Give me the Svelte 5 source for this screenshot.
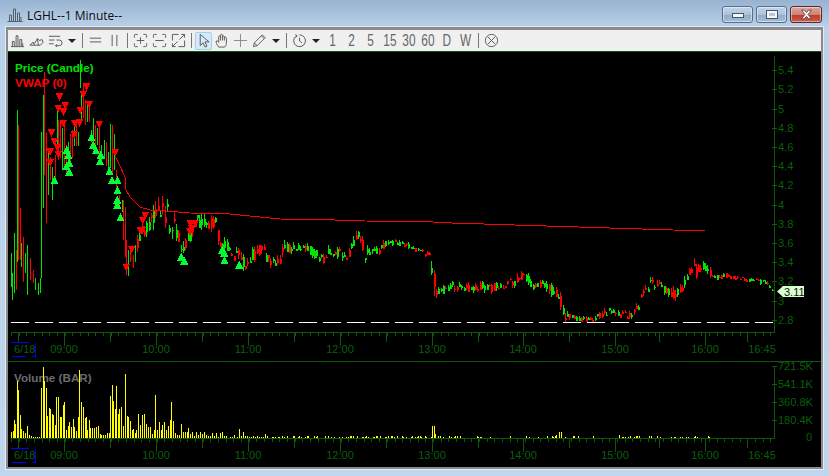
<script>
// pseudo random so the candles stay the same on every load
let seed = 4711;
const rnd = () => {
  seed = (seed * 16807) % 2147483647;
  return seed / 2147483647;
};

const icons = {
  bars: 'M1 14.5h14M2.5 14V9h2v5M6.5 14V3h2v11M10.5 14V7h2v7M13.5 14v-3',
  wave: 'M1 13l3-3 2 1 3-5 2 2 3-1 1 3-3 3zM4 10l2 3M9 6l1 7',
  list: 'M1 3.5h12M1 7.5h6M1 11.5h5M9 7.5h3a2.8 2.8 0 0 1 0 6H8M9.5 12L8 13.5 9.5 15',
  eq: 'M2 5.5h12M2 9.5h12',
  pause: 'M5.5 2v12M10.5 2v12',
  zoom_in: 'M1.5 5V2.5a1 1 0 0 1 1-1H5M11 1.5h2.5a1 1 0 0 1 1 1V5M14.5 11v2.5a1 1 0 0 1-1 1H11M5 14.5H2.5a1 1 0 0 1-1-1V11M4 8h8M8 4.5v7',
  zoom_out: 'M1.5 5V2.5a1 1 0 0 1 1-1H5M11 1.5h2.5a1 1 0 0 1 1 1V5M14.5 11v2.5a1 1 0 0 1-1 1H11M5 14.5H2.5a1 1 0 0 1-1-1V11M3.5 8h9',
  fit: 'M1.5 8V1.5H8M14.5 8v6.5H8M9 7l5.5-5.5M11 1.5h3.5V5M7 9l-5.5 5.5M1.5 11v3.5H5',
  cursor: 'M4.5 1.5v12l3-3 2.2 4.5 2-1-2.2-4.5H14z',
  hand: 'M5 15C3.5 12.5 1.5 10 2.5 8.5c1-.7 2 .5 2.5 1.5V4c0-1.5 2-1.5 2 0V2.5c0-1.5 2-1.5 2 0V4c0-1.3 2-1.3 2 0v1.2c0-1.2 2.2-1.2 2.2.3V11c0 2-1 3-1.7 4zM7 4v4M9 4v4M11 5v3',
  plus: 'M8 1v14M1 8h14',
  pencil: 'M1.5 14.5l1-4 8.5-8.5 3 3-8.5 8.5zM2.5 10.5l3 3M10 3l3 3',
  clock: 'M5 2.8a6.3 6.3 0 1 0 3-.8M3.5 1.5l2 1.5-1.5 1.7M8 5v3.5l2.5 1.8',
  cancel: 'M8 1.5a6.5 6.5 0 1 0 .01 0zM4 4l8 8M12 4l-8 8'
};

const toolbar_items = [
  { icon: 'bars' }, { icon: 'wave' }, { icon: 'list' }, { drop: true }, { sep: true },
  { icon: 'eq' }, { icon: 'pause' }, { sep: true },
  { icon: 'zoom_in' }, { icon: 'zoom_out' }, { icon: 'fit' }, { sep: true },
  { icon: 'cursor', active: true }, { icon: 'hand' }, { icon: 'plus', light: true }, { icon: 'pencil' }, { drop: true }, { sep: true },
  { icon: 'clock' }, { drop: true },
  { text: '1' }, { text: '2' }, { text: '5' }, { text: '15' }, { text: '30' }, { text: '60' }, { text: 'D' }, { text: 'W' },
  { sep: true }, { icon: 'cancel' }
];

// first minutes of the day, read off by hand: x, top, bottom, colour
const early_bars = [
  [11, 253, 287, 'g'], [12, 273, 300, 'g'], [14, 233, 293, 'g'], [16, 250, 290, 'r'], [17, 110, 262, 'g'], [18, 125, 260, 'r'],
  [20, 208, 260, 'r'], [21, 243, 267, 'g'], [23, 237, 282, 'r'], [25, 253, 273, 'g'], [27, 245, 295, 'g'], [30, 258, 280, 'r'],
  [33, 270, 283, 'r'], [35, 278, 290, 'g'], [38, 283, 295, 'g'], [40, 278, 293, 'g'], [41, 132, 278, 'g'], [43, 95, 208, 'g'],
  [44, 72, 175, 'r'], [46, 133, 223, 'r'], [48, 150, 195, 'g'], [50, 157, 180, 'r'], [52, 167, 200, 'g'], [55, 155, 182, 'r'],
  [57, 105, 157, 'g'], [58, 120, 160, 'r'], [60, 122, 158, 'r'], [62, 128, 170, 'g'], [64, 120, 168, 'r'], [66, 145, 175, 'r'],
  [68, 142, 168, 'g'], [70, 134, 165, 'r'], [72, 130, 158, 'r'], [74, 125, 146, 'g'], [76, 120, 146, 'r'], [78, 132, 146, 'g'],
  [80, 60, 88, 'g'], [81, 92, 122, 'g'], [83, 85, 118, 'r'], [85, 100, 125, 'r'], [87, 105, 122, 'g'], [89, 108, 122, 'r'],
  [91, 130, 142, 'g'], [93, 118, 150, 'g'], [95, 125, 146, 'r'], [97, 128, 145, 'g'], [99, 128, 155, 'r'], [101, 145, 160, 'g'],
  [104, 140, 158, 'g'], [106, 142, 166, 'r'], [108, 152, 170, 'g'], [110, 124, 168, 'g'], [112, 125, 175, 'r'], [114, 134, 170, 'g'],
  [116, 170, 195, 'r'], [119, 195, 205, 'r'], [122, 200, 212, 'g'], [123, 200, 240, 'r'], [125, 207, 257, 'r'], [126, 240, 275, 'r'],
  [128, 250, 276, 'g'], [130, 248, 262, 'r'], [133, 255, 268, 'r'], [135, 245, 262, 'g']
];

// rest of the session as x, mid price in px, swing
const price_path = [
  [137, 245, 12], [140, 232, 12], [148, 225, 14], [155, 212, 24], [160, 208, 22], [163, 208, 22], [170, 220, 22], [178, 234, 10],
  [182, 246, 14], [190, 238, 12], [197, 222, 14], [205, 222, 12], [215, 222, 10], [219, 244, 9], [228, 246, 8], [233, 255, 8],
  [240, 254, 11], [245, 268, 8], [250, 256, 12], [258, 251, 10], [262, 249, 9], [268, 260, 10], [273, 262, 10], [280, 262, 10],
  [282, 251, 12], [290, 247, 8], [300, 247, 7], [310, 250, 8], [315, 254, 8], [322, 258, 8], [330, 251, 10], [340, 253, 8],
  [345, 256, 8], [352, 247, 8], [357, 236, 10], [362, 244, 8], [365, 254, 12], [372, 252, 8], [378, 251, 6], [385, 243, 5],
  [395, 243, 5], [400, 244, 5], [410, 247, 5], [420, 251, 5], [430, 254, 4], [433, 275, 26], [435, 292, 8], [440, 288, 7],
  [444, 290, 6], [450, 284, 7], [458, 287, 7], [470, 288, 6], [480, 285, 8], [490, 288, 8], [500, 286, 8], [510, 283, 8],
  [520, 278, 8], [523, 270, 12], [530, 285, 7], [538, 283, 6], [545, 287, 8], [555, 291, 8], [560, 300, 10], [564, 316, 10],
  [570, 316, 6], [578, 319, 4], [590, 320, 4], [600, 315, 6], [610, 310, 9], [615, 313, 8], [620, 314, 6], [630, 316, 6],
  [635, 311, 8], [645, 291, 10], [650, 282, 8], [655, 284, 7], [665, 288, 9], [672, 293, 9], [680, 291, 10], [690, 270, 10],
  [695, 270, 13], [702, 266, 6], [708, 270, 10], [712, 278, 4], [725, 275, 3], [740, 278, 3], [755, 281, 3], [766, 281, 5],
  [770, 289, 3], [774, 290, 2]
];

const mid_at = (x) => {
  for (let i = 1; i < price_path.length; i++) {
    const [x1, y1, s1] = price_path[i];
    if (x <= x1) {
      const [x0, y0, s0] = price_path[i - 1];
      const t = (x - x0) / (x1 - x0);
      return [y0 + (y1 - y0) * t, s0 + (s1 - s0) * t];
    }
  }
  return price_path[price_path.length - 1].slice(1);
};

const build_candles = () => {
  const out = early_bars.map(([x, top, bottom, c]) => ({
    x,
    top,
    bottom,
    body_top: top + (bottom - top) * 0.2,
    body_bottom: bottom - (bottom - top) * 0.2,
    body_width: 1,
    color: c === 'g' ? '#00e600' : '#ff0000'
  }));
  for (let x = 137; x < 774; x += 2.3) {
    const [mid, swing] = mid_at(x);
    const open = mid + (rnd() - 0.5) * swing * 1.15;
    const close = mid + (rnd() - 0.5) * swing * 1.15;
    const top = Math.min(open, close) - rnd() * swing * 0.5;
    const bottom = Math.max(open, close) + rnd() * swing * 0.5;
    out.push({
      x: Math.round(x),
      top: Math.round(top),
      bottom: Math.round(bottom),
      body_top: Math.round(Math.min(open, close)),
      body_bottom: Math.round(Math.max(open, close)) + 1,
      body_width: 2,
      color: close < open ? '#00e600' : '#ff0000'
    });
  }
  return out;
};
const candles = build_candles();

const down_marks = [
  [259, 80], [250, 102], [178, 110], [196, 135], [268, 132], [241, 150], [175, 145], [190, 155], [238, 188], [190, 190],
  [298, 192], [225, 190], [222, 222], [154, 218], [163, 245], [173, 262], [150, 275], [175, 282], [151, 306], [346, 276],
  [395, 567], [379, 622], [436, 465], [428, 480], [420, 510], [426, 512], [572, 490], [586, 490], [576, 505], [570, 515]
];
const up_marks = [
  [163, 362], [208, 336], [208, 310], [200, 320], [205, 285], [200, 270], [275, 232], [280, 255], [288, 272], [300, 305],
  [302, 285], [328, 335], [336, 362], [352, 362], [352, 392], [352, 420], [352, 435], [362, 472], [544, 592], [553, 604],
  [673, 602], [673, 580], [666, 570], [718, 615]
];
const to_page = ([zx, zy]) => [zx / 3, 60 + zy / 3];
const down_points = down_marks.map(to_page).map(([x, y]) => `${x - 4},${y - 3.5} ${x + 4},${y - 3.5} ${x},${y + 4.5}`);
const up_points = up_marks.map(to_page).map(([x, y]) => `${x - 4},${y + 3.5} ${x + 4},${y + 3.5} ${x},${y - 4.5}`);

const vwap_line = '115.5,157 120,166 125,177 126,190 130,197 140,207 150,210 165,211 190,213 230,214 240,215 280,219 335,220 365,221 430,221.5 436,222.5 705,231';

// volume as zoomed x / 3, height
const early_volume = [
  [33, 6], [38, 7], [42, 18], [46, 14], [52, 57], [55, 48], [61, 23], [64, 9], [70, 7], [76, 5], [82, 12], [88, 3], [92, 2], [98, 1], [104, 1],
  [112, 1], [118, 1], [124, 50], [130, 71], [133, 57], [139, 50], [142, 22], [148, 30], [151, 29], [157, 24], [160, 23], [166, 13], [169, 41],
  [175, 41], [181, 21], [184, 21], [190, 33], [193, 36], [199, 8], [205, 12], [208, 16], [213, 11], [220, 19], [223, 11], [229, 7], [235, 21],
  [238, 68], [244, 36], [250, 31], [254, 20], [259, 21], [262, 8], [268, 18], [271, 10], [277, 10], [282, 10], [288, 11], [295, 12], [300, 4],
  [304, 3], [310, 3], [316, 3], [322, 5], [328, 5], [331, 42], [337, 53], [340, 37], [346, 29], [349, 52], [355, 24], [358, 29], [364, 31],
  [370, 12], [376, 64], [382, 22], [385, 21], [391, 17], [397, 8], [400, 9], [406, 5], [409, 8], [415, 24], [421, 13], [427, 23], [433, 24],
  [439, 14], [445, 11], [451, 11], [457, 4], [463, 8], [466, 43], [472, 8], [476, 16], [482, 8], [487, 13], [493, 16], [499, 8], [505, 12],
  [511, 18], [514, 36], [520, 17], [526, 5], [532, 3], [538, 3], [544, 14], [550, 6], [556, 6], [562, 6], [565, 10], [571, 4], [577, 6], [583, 2],
  [589, 6], [595, 3], [601, 6], [607, 4], [613, 6], [619, 3], [625, 2], [631, 2], [637, 5], [643, 2], [649, 5], [655, 1], [661, 5], [667, 6],
  [673, 2], [679, 2], [691, 1], [697, 1], [703, 3], [712, 1], [718, 9], [724, 2], [730, 6], [736, 2], [742, 2], [748, 1], [754, 1], [760, 2],
  [766, 1], [772, 2], [778, 1], [784, 1], [790, 1], [796, 4], [802, 2]
].map(([zx, h]) => [zx / 3, h]);

const late_volume = () => {
  const out = [];
  for (let x = 270; x < 710; x += 1.53) {
    const quiet = x > 440 ? 0.72 : 0.5;
    let h = rnd() < quiet ? 0 : 1 + Math.floor(rnd() * 2);
    if (rnd() < 0.04) h += 2;
    if (Math.abs(x - 433) < 1) h = 12;
    if (Math.abs(x - 560) < 1) h = 6;
    if (h > 0) out.push([x, h]);
  }
  return out;
};
const volume_bars = [...early_volume, ...late_volume()];

const price_labels = [
  ['5.4', 70], ['5.2', 89], ['5', 108.5], ['4.8', 127.5], ['4.6', 147], ['4.4', 166], ['4.2', 185], ['4', 204.5],
  ['3.8', 224], ['3.6', 243], ['3.4', 262], ['3.2', 281], ['3', 300.5], ['2.8', 319.5]
];
const volume_labels = [['721.5K', 366], ['541.1K', 384], ['360.8K', 402], ['180.4K', 420]];
const time_labels = [
  ['09:00', 64], ['10:00', 156], ['11:00', 248], ['12:00', 340], ['13:00', 432], ['14:00', 523], ['15:00', 615], ['16:00', 705], ['16:45', 762]
];

const ticks = [];
for (let x = 11; x < 775; x += 7.67) ticks.push(Math.round(x));
const half_hours = [18, 110, 202, 294, 386, 478, 569, 659, 747];
</script>

<main class="window">
  <header class="titlebar">
    <svg class="app_icon" viewBox="0 0 16 14" aria-hidden="true">
      <path d="M0.5 13.5h15M2.5 13V7h2v6M6.5 13V1h2v12M10.5 13V5h2v8M14 13V9" />
    </svg>
    <span class="title">LGHL--1 Minute--</span>
    <div class="controls">
      <div class="ctl"><span class="min_glyph"></span></div>
      <div class="ctl"><span class="max_glyph"></span></div>
      <div class="ctl close">
        <svg viewBox="0 0 12 10" aria-hidden="true"><path d="M1.5 1h2.5l2 2.2L8 1h2.5L7.5 5l3 4H8L6 6.8 4 9H1.5l3-4z" /></svg>
      </div>
    </div>
  </header>

  <section class="frame">
    <div class="toolbar">
      {#each toolbar_items as item}
        {#if item.sep}
          <span class="sep"></span>
        {:else if item.drop}
          <span class="drop"><i></i></span>
        {:else if item.text}
          <span class="btn"><b>{item.text}</b></span>
        {:else}
          <span class="btn" class:active={item.active} class:light={item.light}>
            <svg viewBox="0 0 16 16" aria-hidden="true"><path d={icons[item.icon]} /></svg>
          </span>
        {/if}
      {/each}
    </div>

    <svg class="chart" viewBox="8 52 813 415" aria-label="LGHL one minute chart">
      <text class="legend" x="15" y="72" fill="#00e000">Price (Candle)</text>
      <text class="legend" x="15" y="87" fill="#ff0000">VWAP (0)</text>
      <text class="legend" x="14" y="382" fill="#6a6a72">Volume (BAR)</text>

      <g shape-rendering="crispEdges">
        {#each candles as c}
          <rect x={c.x} y={c.top} width="1" height={c.bottom - c.top} fill={c.color} />
          <rect x={c.x} y={c.body_top} width={c.body_width} height={Math.max(1, c.body_bottom - c.body_top)} fill={c.color} />
        {/each}
      </g>

      <polyline points={vwap_line} fill="none" stroke="#ff0000" stroke-width="1" shape-rendering="crispEdges" />

      <g shape-rendering="crispEdges">
        {#each down_points as p}<polygon points={p} fill="#ff0000" />{/each}
        {#each up_points as p}<polygon points={p} fill="#00ff33" />{/each}
      </g>

      <path d="M11 322.5H774" stroke="#fff" stroke-dasharray="18 6" shape-rendering="crispEdges" />

      <g shape-rendering="crispEdges">
        {#each volume_bars as [x, h]}
          <rect x={Math.round(x)} y={438 - h} width="1.4" height={h} fill="#ffff00" />
        {/each}
      </g>

      <g class="axis" shape-rendering="crispEdges">
        <path d="M774.5 56V332.5H11M774.5 366V438.5H11M8 361.5H821" />
        {#each [332, 438] as y}
          {#each ticks as x}<path d="M{x + 0.5} {y}v4" />{/each}
          {#each half_hours as x}<path d="M{x + 0.5} {y}v10" />{/each}
          {#each time_labels.slice(0, 8) as [, x]}<path d="M{x + 0.5} {y}v14" />{/each}
        {/each}
        {#each price_labels as [, y]}<path d="M772 {Math.round(y) + 0.5}h5" />{/each}
        {#each volume_labels as [, y]}<path d="M772 {y + 0.5}h5" />{/each}
      </g>

      <g class="axis_text">
        {#each price_labels as [label, y]}<text x="778" y={y + 4}>{label}</text>{/each}
        {#each volume_labels as [label, y]}<text x="778" y={y + 4}>{label}</text>{/each}
        <text x="806" y="441">0</text>
        {#each [349, 455] as y}
          <text x="14" y={y + 4}>6/18</text>
          {#each time_labels as [label, x]}
            <text x={x} y={y + 4} text-anchor="middle">{label}</text>
          {/each}
        {/each}
      </g>

      <g class="date_mark" shape-rendering="crispEdges">
        {#each [0, 106] as dy}
          <path d="M11 {342.5 + dy}h18M12 {356.5 + dy}h14M32 {356.5 + dy}h3.5v-14" />
        {/each}
      </g>

      <g>
        <polygon points="777,291.5 783,286 783,297" fill="#d8ffd0" />
        <rect x="783" y="286" width="21" height="11" fill="#d8ffd0" />
        <text class="last_price" x="784" y="295.5">3.11</text>
      </g>
    </svg>
  </section>
</main>

<style>
:global(body) {
  margin: 0;
  background-color: #bcd4ea;
}

.window {
  width: 829px;
  height: 476px;
  overflow: hidden;
  display: flex;
  flex-direction: column;
  background: linear-gradient(180deg, #98b3d0 0, #bad2ea 28px, #bfd6ec 100%);
  font-family: "Liberation Sans", Arial, sans-serif;
}

.titlebar {
  height: 27px;
  flex: none;
  display: flex;
  align-items: flex-start;
  padding: 6px 7px 0 7px;
  box-sizing: border-box;
}

.app_icon {
  width: 16px;
  height: 14px;
  margin-top: 2px;
  fill: none;
  stroke: #55606c;
  stroke-width: 1;
}

.title {
  margin-left: 4px;
  margin-top: 1px;
  font-family: "Open Sans", "Noto Sans", sans-serif;
  font-size: 12px;
  line-height: 17px;
  color: #0a0a14;
  text-shadow: 0 0 6px rgba(255, 255, 255, 0.5);
}

.controls {
  margin-left: auto;
  display: flex;
  gap: 3px;
}

.ctl {
  width: 31px;
  height: 17px;
  box-sizing: border-box;
  border: 1px solid #566f8e;
  border-radius: 3px;
  box-shadow: inset 0 0 0 1px rgba(255, 255, 255, 0.45);
  background: linear-gradient(180deg, #c4d6e8 0, #aac2da 50%, #8fabc8 51%, #a6bed6 100%);
  display: flex;
  align-items: center;
  justify-content: center;
}

.min_glyph {
  width: 10px;
  height: 3px;
  margin-top: 2px;
  background-color: #f4f6f8;
  border: 1px solid #46566a;
}

.max_glyph {
  width: 6px;
  height: 3px;
  background-color: #b7c9dc;
  border: 2px solid #f4f6f8;
  outline: 1px solid #46566a;
}

.close {
  width: 32px;
  border-color: #5a2436;
  background: linear-gradient(180deg, #dba79c 0, #cf8272 50%, #bd3a26 51%, #c8604c 100%);
}

.close svg {
  width: 13px;
  height: 11px;
  fill: #f4f4f4;
  stroke: #55303a;
  stroke-width: 0.7;
}

.frame {
  margin: 0 6px;
  border: 2px solid #8b8b8b;
  border-top-width: 3px;
  box-shadow: 0 0 0 1px rgba(255, 255, 255, 0.55);
  flex: none;
  display: flex;
  flex-direction: column;
}

.toolbar {
  height: 21px;
  background-color: #f0f0f0;
  border-bottom: 1px solid #0a5a0a;
  display: flex;
  align-items: center;
}

.btn {
  width: 19px;
  height: 18px;
  flex: none;
  box-sizing: border-box;
  display: flex;
  align-items: center;
  justify-content: center;
}

.btn svg {
  width: 15px;
  height: 15px;
  fill: none;
  stroke: #555;
  stroke-width: 1;
}

.btn.light svg {
  stroke: #8a8a8a;
}

.btn.active {
  width: 17px;
  border: 1px solid #a5cdf0;
  border-radius: 2px;
  background-color: #d6e9fa;
}

.btn b {
  font-weight: 400;
  font-size: 16px;
  color: #666;
  transform: scaleX(0.74);
}

.sep {
  width: 7px;
  height: 15px;
  flex: none;
  background: linear-gradient(#777, #777) center / 1px 100% no-repeat;
}

.drop {
  width: 14px;
  flex: none;
  display: flex;
  justify-content: center;
}

.drop i {
  border-left: 4px solid transparent;
  border-right: 4px solid transparent;
  border-top: 4px solid #222;
}

.chart {
  display: block;
  width: 813px;
  height: 415px;
  background-color: #000;
}

.legend {
  font-size: 11.7px;
  font-weight: 700;
}

.axis path {
  fill: none;
  stroke: #0a5a0a;
  stroke-width: 1;
}

.axis_text text {
  font-size: 11px;
  fill: #0a5f0a;
}

.date_mark path {
  fill: none;
  stroke: #0000ff;
}

.last_price {
  font-size: 11px;
  fill: #111;
}
</style>
